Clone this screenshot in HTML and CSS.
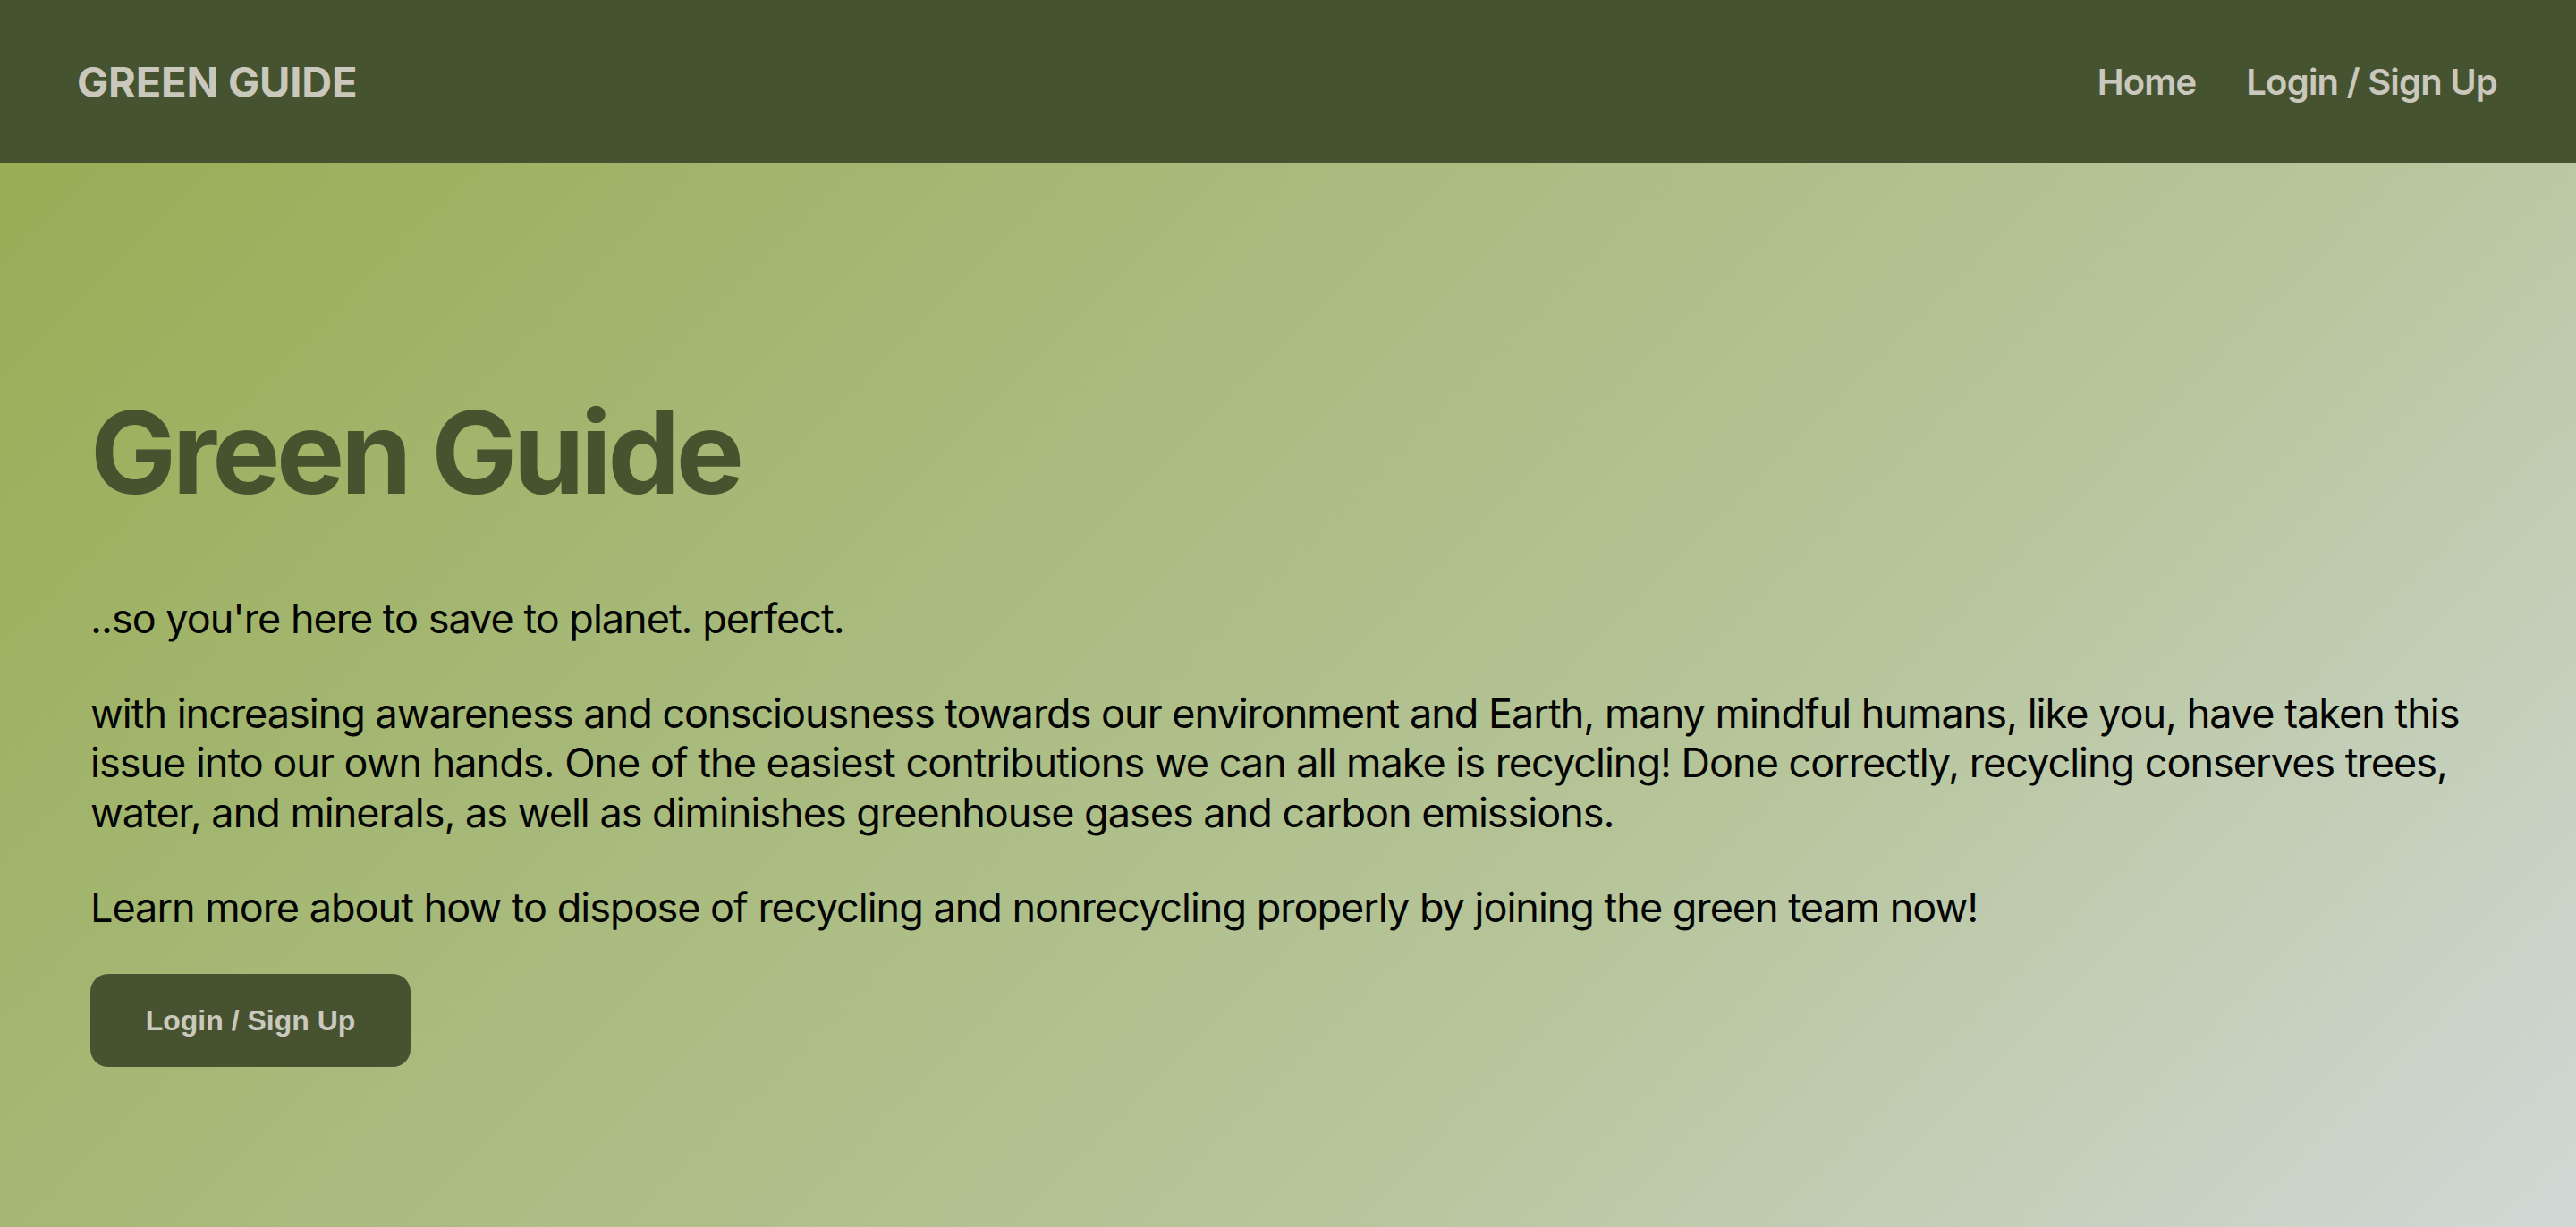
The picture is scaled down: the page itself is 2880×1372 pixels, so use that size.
FILE: index.html
```html
<!DOCTYPE html>
<html lang="en">
<head>
<meta charset="utf-8">
<title>Green Guide</title>
<link rel="stylesheet" href="styles.css">
</head>
<body>
<header class="topbar">
  <div class="brand">GREEN GUIDE</div>
  <nav class="nav">
    <a class="nav-link" href="#">Home</a>
    <a class="nav-link" href="#">Login / Sign Up</a>
  </nav>
</header>
<main class="hero">
  <h1 class="hero-title">Green Guide</h1>
  <p class="hero-text">..so you're here to save to planet. perfect.</p>
  <p class="hero-text">with increasing awareness and consciousness towards our environment and Earth, many mindful humans, like you, have taken this issue into our own hands. One of the easiest contributions we can all make is recycling! Done correctly, recycling conserves trees, water, and minerals, as well as diminishes greenhouse gases and carbon emissions.</p>
  <p class="hero-text hero-text-last">Learn more about how to dispose of recycling and nonrecycling properly by joining the green team now!</p>
  <button class="cta" type="button">Login / Sign Up</button>
</main>
</body>
</html>
```
FILE: styles.css
```css
html, body {
  margin: 0;
  padding: 0;
}

body {
  font-family: Inter, "Noto Sans", sans-serif;
  min-height: 100vh;
  display: flex;
  flex-direction: column;
}

.topbar {
  height: 182px;
  background: #465331;
  display: flex;
  align-items: center;
  justify-content: space-between;
  padding: 0 88px 0 86px;
  box-sizing: border-box;
}

.brand {
  color: #cac8bc;
  font-weight: 700;
  font-size: 47px;
  letter-spacing: -0.2px;
}

.nav {
  display: flex;
  gap: 56px;
}

.nav-link {
  color: #cac8bc;
  text-decoration: none;
  font-weight: 600;
  font-size: 40px;
  letter-spacing: -0.8px;
}

.hero {
  flex: 1;
  display: flex;
  flex-direction: column;
  align-items: flex-start;
  padding: 247px 101px 0 101px;
  background: linear-gradient(135deg, #98ad55 0%, #a8ba7c 35%, #b7c59b 65%, #d0d8d6 100%);
}

.hero-title {
  margin: 0 0 81px 0;
  font-size: 128px;
  line-height: 1.2;
  font-weight: 700;
  color: #47532f;
  letter-spacing: -4.4px;
}

.hero-text {
  margin: 0 0 51px 0;
  font-size: 45px;
  line-height: 1.23;
  color: #050505;
  letter-spacing: -1px;
}

.hero-text-last {
  margin-bottom: 47px;
}

.cta {
  width: 358px;
  height: 104px;
  border: none;
  border-radius: 20px;
  background: #475330;
  color: #c9c9bf;
  font-family: "Liberation Sans", Arial, sans-serif;
  font-weight: 700;
  font-size: 32px;
  padding: 0;
  cursor: pointer;
}
```
